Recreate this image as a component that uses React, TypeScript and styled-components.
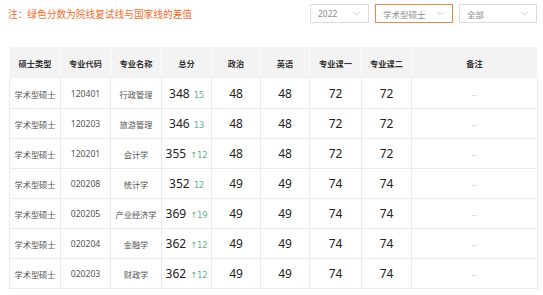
import React from 'react';
import styled, { createGlobalStyle } from 'styled-components';

const Global = createGlobalStyle`
  body {
    margin: 0;
    background: #fff;
    font-family: "Noto Sans", "Noto Sans CJK SC", sans-serif;
  }
`;

const S = {
  Page: styled.div`
    padding: 4px 6px 0 9px;
  `,

  TopBar: styled.div`
    display: flex;
    align-items: center;
    justify-content: space-between;
    height: 19px;
  `,

  Note: styled.span`
    font-size: 9.7px;
    color: #f26c2a;
    margin-left: -1px;
  `,

  Filters: styled.div`
    display: flex;
    gap: 6px;
  `,

  Select: styled.div<{ $w: number; $active?: boolean }>`
    box-sizing: border-box;
    width: ${(p) => p.$w}px;
    height: 19px;
    display: flex;
    align-items: center;
    justify-content: space-between;
    padding: 0 8px 0 7px;
    border: 1px solid ${(p) => (p.$active ? '#e8884a' : '#dcdcdc')};
    font-size: 8.5px;
    color: #8c8c8c;
  `,

  Table: styled.table`
    margin-top: 24px;
    width: 528px;
    border-collapse: collapse;
    table-layout: fixed;
  `,

  HeadCell: styled.th`
    height: 31px;
    padding: 0;
    background: #f3f3f3;
    border: 1px solid #fafafa;
    border-top: none;
    font-size: 8.2px;
    font-weight: bold;
    color: #333;
    text-align: center;
  `,

  Cell: styled.td<{ $kind?: 'text' | 'code' | 'num' | 'empty' }>`
    height: 29px;
    padding: 0;
    border: 1px solid #ebebeb;
    text-align: center;
    white-space: nowrap;
    color: ${(p) => (p.$kind === 'num' ? '#222' : p.$kind === 'empty' ? '#bbb' : '#555')};
    font-size: ${(p) => (p.$kind === 'num' ? '12px' : p.$kind === 'code' ? '8.6px' : p.$kind === 'empty' ? '7.5px' : '8.2px')};
  `,

  Diff: styled.span`
    margin-left: 4px;
    font-size: 8.6px;
    color: #6dae90;
    font-family: "DejaVu Sans", "Noto Sans", sans-serif;
    letter-spacing: -0.3px;
  `,
};

const Chevron = () => (
  <svg width="7" height="5" viewBox="0 0 7 5" fill="none">
    <path d="M0.5 0.8 L3.5 4 L6.5 0.8" stroke="#c4c4c4" strokeWidth="0.8" />
  </svg>
);

const cols = [51, 50, 51, 50, 49, 49, 52, 50, 126];
const heads = ['硕士类型', '专业代码', '专业名称', '总分', '政治', '英语', '专业课一', '专业课二', '备注'];

const rows = [
  { code: '120401', name: '行政管理', total: 348, diff: '15', pol: 48, eng: 48, c1: 72, c2: 72 },
  { code: '120203', name: '旅游管理', total: 346, diff: '13', pol: 48, eng: 48, c1: 72, c2: 72 },
  { code: '120201', name: '会计学', total: 355, diff: '↑12', pol: 48, eng: 48, c1: 72, c2: 72 },
  { code: '020208', name: '统计学', total: 352, diff: '12', pol: 49, eng: 49, c1: 74, c2: 74 },
  { code: '020205', name: '产业经济学', total: 369, diff: '↑19', pol: 49, eng: 49, c1: 74, c2: 74 },
  { code: '020204', name: '金融学', total: 362, diff: '↑12', pol: 49, eng: 49, c1: 74, c2: 74 },
  { code: '020203', name: '财政学', total: 362, diff: '↑12', pol: 49, eng: 49, c1: 74, c2: 74 },
];

export default function App() {
  return (
    <S.Page>
      <Global />
      <S.TopBar>
        <S.Note>注：绿色分数为院线复试线与国家线的差值</S.Note>
        <S.Filters>
          <S.Select $w={59}>
            <span>2022</span>
            <Chevron />
          </S.Select>
          <S.Select $w={78} $active>
            <span>学术型硕士</span>
            <Chevron />
          </S.Select>
          <S.Select $w={78}>
            <span>全部</span>
            <Chevron />
          </S.Select>
        </S.Filters>
      </S.TopBar>
      <S.Table>
        <colgroup>
          {cols.map((w, i) => (
            <col key={i} style={{ width: w }} />
          ))}
        </colgroup>
        <thead>
          <tr>
            {heads.map((h) => (
              <S.HeadCell key={h}>{h}</S.HeadCell>
            ))}
          </tr>
        </thead>
        <tbody>
          {rows.map((r) => (
            <tr key={r.code}>
              <S.Cell>学术型硕士</S.Cell>
              <S.Cell $kind="code">{r.code}</S.Cell>
              <S.Cell>{r.name}</S.Cell>
              <S.Cell $kind="num">
                {r.total}
                <S.Diff>{r.diff}</S.Diff>
              </S.Cell>
              <S.Cell $kind="num">{r.pol}</S.Cell>
              <S.Cell $kind="num">{r.eng}</S.Cell>
              <S.Cell $kind="num">{r.c1}</S.Cell>
              <S.Cell $kind="num">{r.c2}</S.Cell>
              <S.Cell $kind="empty">--</S.Cell>
            </tr>
          ))}
        </tbody>
      </S.Table>
    </S.Page>
  );
}
